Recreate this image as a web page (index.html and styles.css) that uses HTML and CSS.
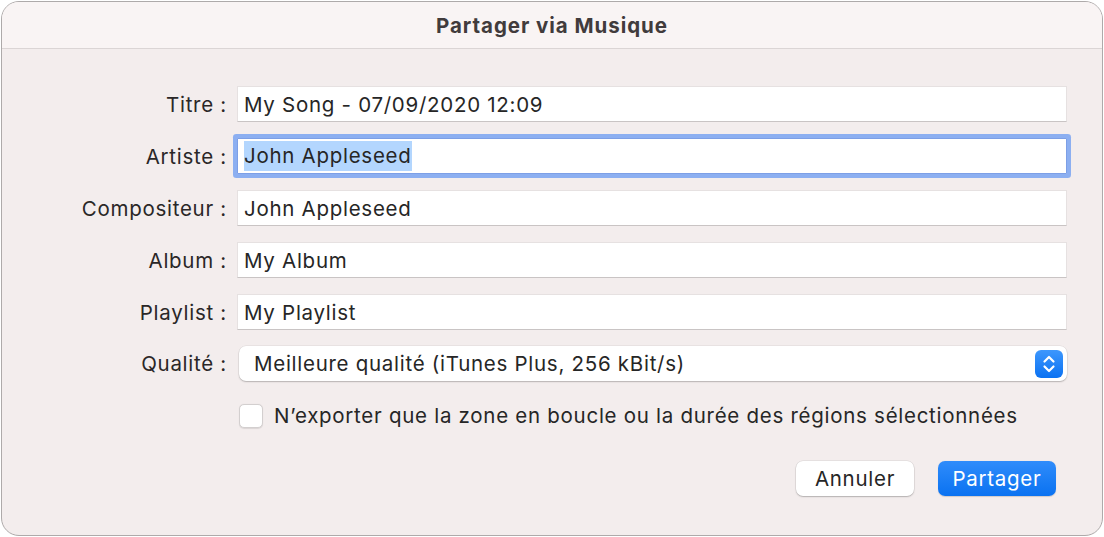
FILE: index.html
```html
<!DOCTYPE html>
<html lang="fr">
<head>
<meta charset="utf-8">
<title>Partager via Musique</title>
<link rel="stylesheet" href="styles.css">
</head>
<body>
<div class="dialog">
  <div class="titlebar">Partager via Musique</div>
  <div class="content">
    <div class="form">
      <div class="label">Titre :</div>
      <div class="field">My Song - 07/09/2020 12:09</div>

      <div class="label">Artiste :</div>
      <div class="field focused"><span class="sel">John Appleseed</span></div>

      <div class="label">Compositeur :</div>
      <div class="field">John Appleseed</div>

      <div class="label">Album :</div>
      <div class="field">My Album</div>

      <div class="label">Playlist :</div>
      <div class="field">My Playlist</div>

      <div class="label">Qualité :</div>
      <div class="popup">
        <span class="popup-text">Meilleure qualité (iTunes Plus, 256 kBit/s)</span>
        <span class="stepper">
          <svg width="28" height="28" viewBox="0 0 28 28">
            <path d="M9.5 11.5 L14 7 L18.5 11.5 M9.5 16.5 L14 21 L18.5 16.5" fill="none" stroke="#ffffff" stroke-width="2.2" stroke-linecap="round" stroke-linejoin="round"/>
          </svg>
        </span>
      </div>

      <div class="spacer"></div>
      <label class="check-row">
        <span class="checkbox"></span>
        <span class="check-text">N’exporter que la zone en boucle ou la durée des régions sélectionnées</span>
      </label>
    </div>
    <div class="buttons">
      <div class="btn">Annuler</div>
      <div class="btn primary">Partager</div>
    </div>
  </div>
</div>
</body>
</html>
```

FILE: styles.css
```css
html, body {
  margin: 0;
  padding: 0;
  background: #ffffff;
}
body {
  padding: 1px;
  font-family: Inter, "Liberation Sans", sans-serif;
  font-size: 20.5px;
  letter-spacing: 0.72px;
  color: #262626;
}
.dialog {
  box-sizing: border-box;
  width: 1102px;
  height: 535px;
  border: 1px solid #aeaaaa;
  border-radius: 18px;
  background: #f3eded;
  overflow: hidden;
  display: flex;
  flex-direction: column;
}
.titlebar {
  height: 46px;
  flex: none;
  background: #f9f4f4;
  border-bottom: 1px solid #dbd5d5;
  display: flex;
  align-items: center;
  justify-content: center;
  font-weight: 700;
  font-size: 20.5px;
  letter-spacing: 0.95px;
  color: #413b3c;
}
.content {
  flex: 1;
  display: flex;
  flex-direction: column;
}
.form {
  display: grid;
  grid-template-columns: 225px 1fr;
  column-gap: 10px;
  row-gap: 16px;
  padding: 37px 35px 0 0;
  align-items: center;
}
.label {
  text-align: right;
  white-space: nowrap;
  color: #2a2727;
}
.field {
  box-sizing: border-box;
  height: 36px;
  background: #ffffff;
  border: 1px solid #e6e1e1;
  border-bottom-color: #c9c4c4;
  padding: 0 6px;
  display: flex;
  align-items: center;
  white-space: nowrap;
}
.field.focused {
  border: 1px solid #7d9fe6;
  border-radius: 1px;
  box-shadow: 0 0 0 4px #8caff1;
}
.sel {
  background: #b3d6fe;
  line-height: 30px;
}
.popup {
  box-sizing: border-box;
  margin-left: 2px;
  height: 35px;
  background: #ffffff;
  border-radius: 7px;
  box-shadow: 0 0 0 0.5px rgba(0,0,0,0.08), 0 1px 1.5px rgba(0,0,0,0.22);
  display: flex;
  align-items: center;
  justify-content: space-between;
  padding: 0 4px 0 15px;
}
.stepper {
  width: 28px;
  height: 28px;
  border-radius: 6px;
  background: linear-gradient(#3d97fd, #0b72f2);
  display: flex;
}
.spacer {
  height: 1px;
}
.check-row {
  display: flex;
  align-items: center;
  gap: 11px;
  margin-left: 2px;
  margin-top: 6px;
  white-space: nowrap;
}
.checkbox {
  box-sizing: border-box;
  width: 24px;
  height: 24px;
  flex: none;
  background: #ffffff;
  border: 1px solid #d3cfcf;
  border-radius: 5px;
  box-shadow: 0 0.5px 1px rgba(0,0,0,0.1);
}
.buttons {
  display: flex;
  justify-content: flex-end;
  gap: 24px;
  padding: 0 46px 0 0;
  margin-top: 33px;
}
.btn {
  box-sizing: border-box;
  width: 118px;
  height: 35px;
  border-radius: 7px;
  background: #ffffff;
  box-shadow: 0 0 0 0.5px rgba(0,0,0,0.1), 0 1px 1.5px rgba(0,0,0,0.22);
  display: flex;
  align-items: center;
  justify-content: center;
  color: #262626;
}
.btn.primary {
  background: linear-gradient(#2f8cfb, #0a72f1);
  color: #ffffff;
  box-shadow: 0 0.5px 1px rgba(0,0,0,0.15);
}
```
